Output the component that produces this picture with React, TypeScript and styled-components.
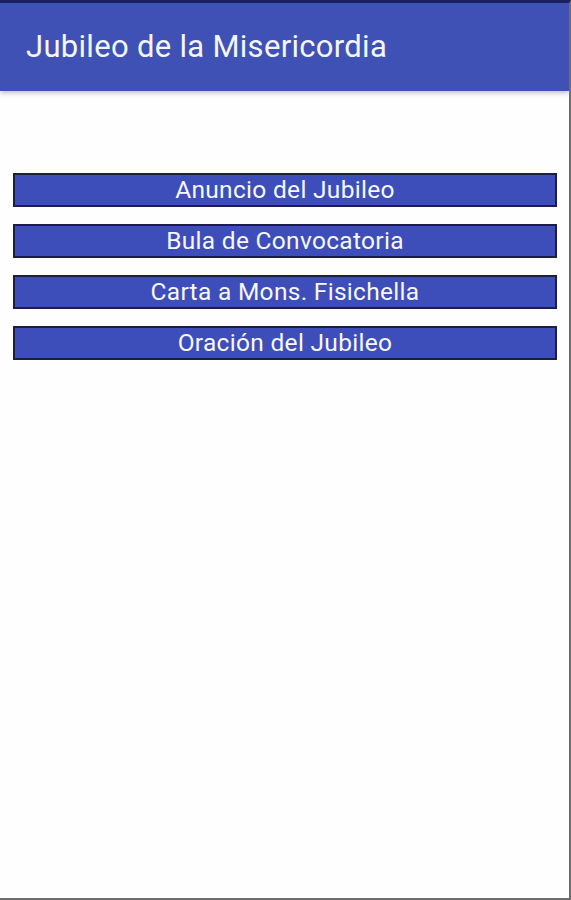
import React from 'react';
import styled, { createGlobalStyle } from 'styled-components';

const GlobalStyle = createGlobalStyle`
    html, body {
        margin: 0;
        padding: 0;
        background: #ffffff;
    }
    body {
        font-family: Roboto, "Noto Sans", "Liberation Sans", sans-serif;
    }
`;

const Screen = styled.div`
    width: 571px;
    height: 900px;
    box-sizing: border-box;
    border-top: 3px solid #1b2160;
    border-right: 2px solid #6d6d6d;
    border-bottom: 2px solid #6d6d6d;
    background: #fefefe;
    display: flex;
    flex-direction: column;
    overflow: hidden;
`;

const AppBar = styled.header`
    height: 86px;
    flex-shrink: 0;
    background: #3f51b5;
    display: flex;
    align-items: center;
    padding: 0 20px 2px 26px;
    box-shadow: 0 2px 5px rgba(0, 0, 0, 0.25);
    position: relative;
    z-index: 1;
`;

const Title = styled.h1`
    margin: 0;
    font-size: 31px;
    font-weight: 400;
    color: #f4f6ff;
    letter-spacing: 0.3px;
`;

const Menu = styled.nav`
    display: flex;
    flex-direction: column;
    gap: 17px;
    padding: 82px 12px 0 13px;
`;

const MenuButton = styled.button`
    height: 34px;
    box-sizing: border-box;
    border: 2px solid #1c1e45;
    background: #3d4db9;
    color: #f6f7ff;
    font-family: Roboto, "Noto Sans", "Liberation Sans", sans-serif;
    font-size: 24.5px;
    letter-spacing: 0.3px;
    line-height: 28px;
    padding: 0;
    text-align: center;
    cursor: pointer;
`;

const items = ['Anuncio del Jubileo', 'Bula de Convocatoria', 'Carta a Mons. Fisichella', 'Oración del Jubileo'];

function App() {
    return (
        <>
            <GlobalStyle />
            <Screen>
                <AppBar>
                    <Title>Jubileo de la Misericordia</Title>
                </AppBar>
                <Menu>
                    {items.map((item) => (
                        <MenuButton key={item}>{item}</MenuButton>
                    ))}
                </Menu>
            </Screen>
        </>
    );
}

export default App;
